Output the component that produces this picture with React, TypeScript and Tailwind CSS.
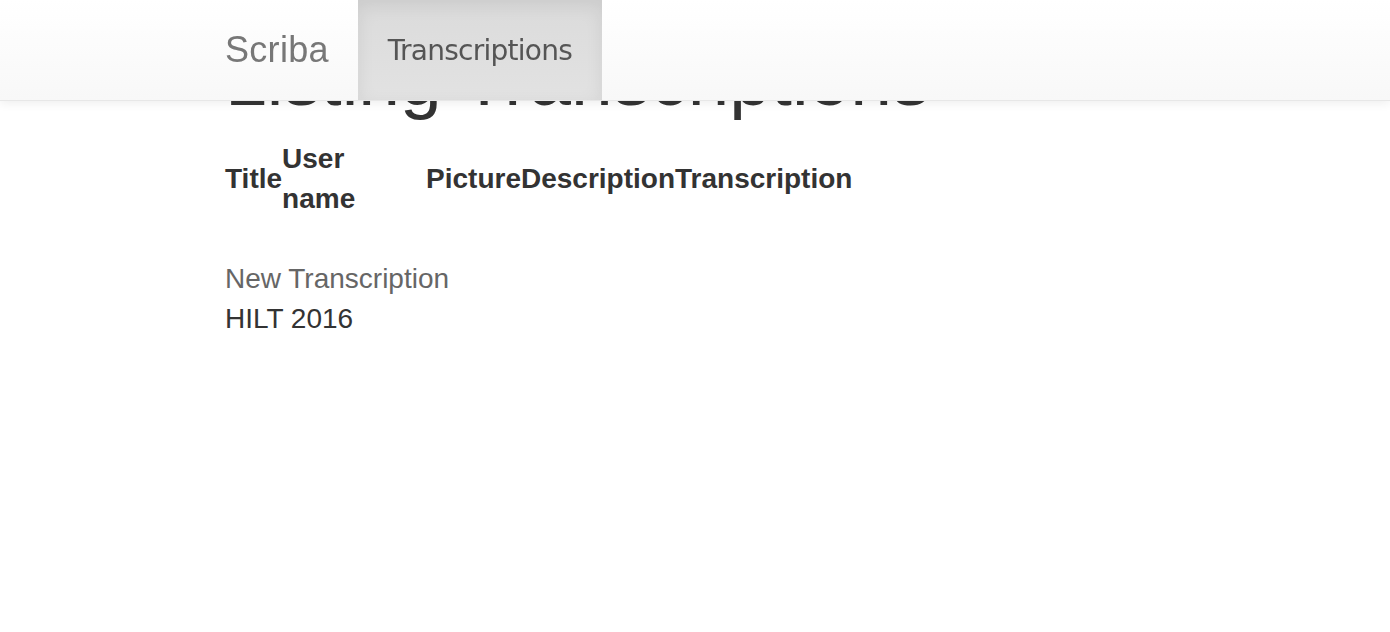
import React from "react";

export default function App() {
  return (
    <div className="min-h-[632px] bg-white text-[#333] font-['Liberation_Sans','Helvetica_Neue',Arial,sans-serif]">
      <nav className="fixed top-0 inset-x-0 z-10 h-[101px] border-b border-[#e7e7e7] bg-gradient-to-b from-white to-[#f8f8f8] shadow-[0_2px_10px_rgba(0,0,0,0.075)]">
        <div className="mx-auto w-[970px] flex h-[100px]">
          <a className="block pl-[15px] pr-[29px] pt-[30px] text-[36px] leading-[40px] text-[#777] tracking-[0.3px]">Scriba</a>
          <a className="block h-[100px] px-[30px] pt-[31px] text-[28px] leading-[40px] tracking-[-0.75px] text-[#555] font-['DejaVu_Sans',Verdana,sans-serif] bg-gradient-to-b from-[#dbdbdb] to-[#e2e2e2] shadow-[inset_0_6px_18px_rgba(0,0,0,0.075)]">
            Transcriptions
          </a>
        </div>
      </nav>
      <main className="mx-auto w-[970px] px-[15px] pt-[40px]">
        <h1 className="mb-[20px] h-[79px] text-[75px] leading-[79px] font-normal">Listing Transcriptions</h1>
        <table className="border-collapse">
          <thead>
            <tr className="h-[80px] text-[28px] leading-[40px] font-bold align-middle">
              <th className="p-0 text-left">Title</th>
              <th className="p-0 text-left w-[144px]">User<br />name</th>
              <th className="p-0 text-left">Picture</th>
              <th className="p-0 text-left">Description</th>
              <th className="p-0 text-left">Transcription</th>
            </tr>
          </thead>
        </table>
        <div className="h-[40px]" />
        <div className="text-[28px] leading-[40px]">
          <a className="block text-[#666]">New Transcription</a>
          <div>HILT 2016</div>
        </div>
      </main>
    </div>
  );
}
